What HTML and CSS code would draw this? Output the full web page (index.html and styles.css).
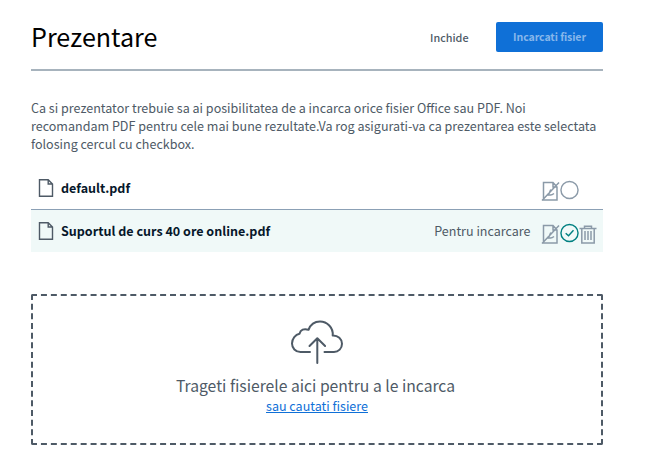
FILE: index.html
```html
<!DOCTYPE html>
<html lang="ro">
<head>
<meta charset="utf-8">
<title>Prezentare</title>
<link rel="stylesheet" href="styles.css">
</head>
<body>
<svg class="defs" aria-hidden="true">
  <symbol id="file" viewBox="0 0 16 20"><path d="M2 1.700h8.200l4.300 4.300v12.300H1.500V1.700zM10.200 1.700V6h4.300"/></symbol>
  <symbol id="nodownload" viewBox="0 0 19 20"><path d="M2.500 1.500h9.500l4 4.500v13H2.500zM12 1.500v4.500h4M9.800 8.500c-.5 2-1.500 4-3.300 6M7 12.200c1 2.500 3.500 2.500 6 .3M1 19.500L18 1.500"/></symbol>
  <symbol id="trash" viewBox="0 0 18 20"><path d="M0.500 4.500h17M5.500 4V2.200h7V4M2.800 4.500v14.500h12.400v-14.500M6 7v9M9 7v9M12 7v9"/></symbol>
</svg>
<main class="modal">
  <header class="header">
    <h1 class="title">Prezentare</h1>
    <div class="actions">
      <button class="btn">Inchide</button>
      <button class="btn btn-primary">Incarcati fisier</button>
    </div>
  </header>
  <p class="hint">Ca si prezentator trebuie sa ai posibilitatea de a incarca orice fisier Office sau PDF. Noi<br>recomandam PDF pentru cele mai bune rezultate.Va rog asigurati-va ca prezentarea este selectata<br>folosing cercul cu checkbox.</p>
  <div class="files">
    <div class="row">
      <svg class="file-icon"><use href="#file"/></svg>
      <span class="name">default.pdf</span>
      <div class="tools">
        <svg class="tool"><use href="#nodownload"/></svg>
        <svg class="check" viewBox="0 0 20 20"><circle cx="10" cy="10" r="9"/></svg>
        <span class="slot"></span>
      </div>
    </div>
    <div class="row row-new">
      <svg class="file-icon"><use href="#file"/></svg>
      <span class="name">Suportul de curs 40 ore online.pdf</span>
      <span class="status">Pentru incarcare</span>
      <div class="tools">
        <svg class="tool"><use href="#nodownload"/></svg>
        <svg class="check checked" viewBox="0 0 20 20"><circle cx="10" cy="10" r="9"/><path d="M6 10.200l3 2.800 5.200-5.800"/></svg>
        <svg class="tool trash"><use href="#trash"/></svg>
      </div>
    </div>
  </div>
  <div class="dropzone">
    <svg class="cloud" viewBox="0 0 54 46"><path d="M20 33H10.500C5.500 33 2 29 2 24.500C2 19.500 5.500 15.500 9.500 14.800C10.500 10.800 14 9.200 18.500 10.800C20.500 5.500 25 2.500 30 2.500C37 2.500 43.500 8.500 42.700 16.500C48 16.300 52 20 52 24.800C52 29.500 48.500 33 44 33H34.500M27.300 44V19.500M19.500 27l7.800-7.800 7.800 7.800"/></svg>
    <div class="drop-text">Trageti fisierele aici pentru a le incarca</div>
    <a class="browse">sau cautati fisiere</a>
  </div>
</main>
</body>
</html>
```
FILE: styles.css
```css
body {
  margin: 0;
  background: #fff;
  color: #4e5a66;
  font-family: "Noto Sans CJK SC", sans-serif;
}
.defs { display: none; }
.modal { width: 572px; padding: 21px 0 0 31px; white-space: nowrap; }
.header {
  display: flex;
  justify-content: space-between;
  height: 48px;
  border-bottom: 2px solid #a7b3bd;
}
.title {
  margin: 0;
  color: #000;
  font-size: 25.1px;
  font-weight: 400;
  line-height: 31px;
}
.actions { display: flex; gap: 10px; padding-top: 1px; }
.btn {
  height: 30px;
  padding: 0 17.5px;
  border: 0;
  border-radius: 2px;
  background: none;
  color: #4e5a66;
  font: 500 10.8px/30px "Noto Sans CJK SC", sans-serif;
}
.btn-primary { width: 107px; padding: 0; background: #0f70d7; color: #87b7eb; font-size: 10.6px; font-weight: 700; letter-spacing: -0.1px; }
.hint { margin: 28px 0 0; font-size: 12.54px; line-height: 18px; }
.files { margin-top: 15px; }
.row { display: flex; align-items: center; height: 41px; box-sizing: border-box; padding: 0 7px; }
.row:first-child { padding-bottom: 1px; }
.row-new { height: 43px; border-top: 1px solid #8ba0b5; background: #f0f9f8; }
.file-icon { width: 16px; height: 20px; margin-right: 7px; fill: none; stroke: #4e5a66; stroke-width: 1.4; }
.name { color: #06172a; font-size: 12.54px; font-weight: 700; line-height: 18px; }
.status { margin-left: auto; margin-right: 10px; font-size: 12.54px; line-height: 18px; }
.tools { display: flex; margin-left: auto; }
.status + .tools { margin-left: 0; }
.tool { width: 19px; height: 20px; margin-top: 5px; fill: none; stroke: #8b9aa8; stroke-width: 1.5; }
.check { width: 19px; height: 20px; margin-top: 4px; overflow: visible; fill: none; stroke: #8b9aa8; stroke-width: 1.5; }
.checked { stroke: #008081; }
.trash { width: 18px; margin-right: -0.5px; }
.slot { width: 17.5px; }
.dropzone {
  display: flex;
  flex-direction: column;
  align-items: center;
  box-sizing: border-box;
  height: 151px;
  margin-top: 42px;
  padding-top: 23px;
  border: 2px dashed #4e5a66;
  border-radius: 2px;
}
.cloud { width: 54px; height: 46px; fill: none; stroke: #4e5a66; stroke-width: 2; stroke-linecap: round; stroke-linejoin: round; }
.drop-text { margin: 9px 3px -1px 0; font-size: 15.7px; line-height: 24px; }
.browse { color: #0f70d7; font-size: 12.54px; line-height: 18px; text-decoration: underline; }
```
